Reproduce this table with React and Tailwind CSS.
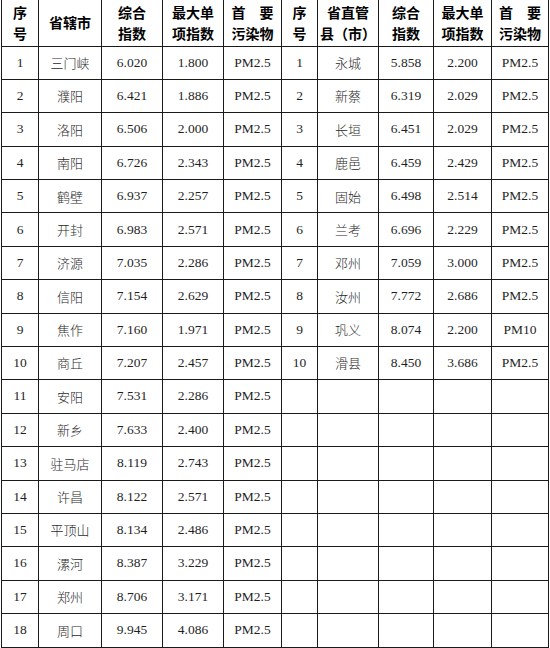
const leftRows = [
  ['1', '三门峡', '6.020', '1.800', 'PM2.5'],
  ['2', '濮阳', '6.421', '1.886', 'PM2.5'],
  ['3', '洛阳', '6.506', '2.000', 'PM2.5'],
  ['4', '南阳', '6.726', '2.343', 'PM2.5'],
  ['5', '鹤壁', '6.937', '2.257', 'PM2.5'],
  ['6', '开封', '6.983', '2.571', 'PM2.5'],
  ['7', '济源', '7.035', '2.286', 'PM2.5'],
  ['8', '信阳', '7.154', '2.629', 'PM2.5'],
  ['9', '焦作', '7.160', '1.971', 'PM2.5'],
  ['10', '商丘', '7.207', '2.457', 'PM2.5'],
  ['11', '安阳', '7.531', '2.286', 'PM2.5'],
  ['12', '新乡', '7.633', '2.400', 'PM2.5'],
  ['13', '驻马店', '8.119', '2.743', 'PM2.5'],
  ['14', '许昌', '8.122', '2.571', 'PM2.5'],
  ['15', '平顶山', '8.134', '2.486', 'PM2.5'],
  ['16', '漯河', '8.387', '3.229', 'PM2.5'],
  ['17', '郑州', '8.706', '3.171', 'PM2.5'],
  ['18', '周口', '9.945', '4.086', 'PM2.5'],
];

const rightRows = [
  ['1', '永城', '5.858', '2.200', 'PM2.5'],
  ['2', '新蔡', '6.319', '2.029', 'PM2.5'],
  ['3', '长垣', '6.451', '2.029', 'PM2.5'],
  ['4', '鹿邑', '6.459', '2.429', 'PM2.5'],
  ['5', '固始', '6.498', '2.514', 'PM2.5'],
  ['6', '兰考', '6.696', '2.229', 'PM2.5'],
  ['7', '邓州', '7.059', '3.000', 'PM2.5'],
  ['8', '汝州', '7.772', '2.686', 'PM2.5'],
  ['9', '巩义', '8.074', '2.200', 'PM10'],
  ['10', '滑县', '8.450', '3.686', 'PM2.5'],
];

const widths = [37, 63, 61, 61, 58, 36, 61, 55, 58, 57];

const cell = 'border border-[#1a1a1a] text-center align-middle p-0';
const headCell = `${cell} border-t-0 font-bold text-black text-[14px] leading-[21px]`;
const serif = { fontFamily: '"Liberation Serif", "Noto Sans CJK SC", serif' };

const Head = ({ top, bottom }) => (
  <th className={headCell}>
    <div>{top}</div>
    <div>{bottom}</div>
  </th>
);

const Pollutant = () => (
  <th className={headCell}>
    <div className="mx-auto flex w-[42px] justify-between">
      <span>首</span>
      <span>要</span>
    </div>
    <div>污染物</div>
  </th>
);

const Cells = ({ row }) =>
  row ? (
    <>
      <td className={`${cell} text-[13.5px] text-[#1f1f1f]`}>{row[0]}</td>
      <td className={`${cell} text-[13px] font-light text-[#2a2a2a]`} style={{ fontFamily: '"Noto Sans CJK SC", serif' }}>
        {row[1]}
      </td>
      <td className={`${cell} text-[13.5px] text-[#1f1f1f]`}>{row[2]}</td>
      <td className={`${cell} text-[13.5px] text-[#1f1f1f]`}>{row[3]}</td>
      <td className={`${cell} text-[13.5px] text-[#1f1f1f]`}>{row[4]}</td>
    </>
  ) : (
    <>
      <td className={cell}></td>
      <td className={cell}></td>
      <td className={cell}></td>
      <td className={cell}></td>
      <td className={cell}></td>
    </>
  );

export default function App() {
  return (
    <div className="h-[648px] w-[550px] bg-white pl-px" style={serif}>
      <table className="w-[547px] table-fixed border-collapse">
        <colgroup>
          {widths.map((w, i) => (
            <col key={i} style={{ width: w }} />
          ))}
        </colgroup>
        <thead>
          <tr className="h-[46px]" style={{ fontFamily: '"Noto Sans CJK SC", sans-serif' }}>
            <Head top="序" bottom="号" />
            <th className={headCell}>省辖市</th>
            <Head top="综合" bottom="指数" />
            <Head top="最大单" bottom="项指数" />
            <Pollutant />
            <Head top="序" bottom="号" />
            <Head top="省直管" bottom="县（市）" />
            <Head top="综合" bottom="指数" />
            <Head top="最大单" bottom="项指数" />
            <Pollutant />
          </tr>
        </thead>
        <tbody>
          {leftRows.map((row, i) => (
            <tr key={i} className="h-[33.4px]">
              <Cells row={row} />
              <Cells row={rightRows[i]} />
            </tr>
          ))}
        </tbody>
      </table>
    </div>
  );
}
